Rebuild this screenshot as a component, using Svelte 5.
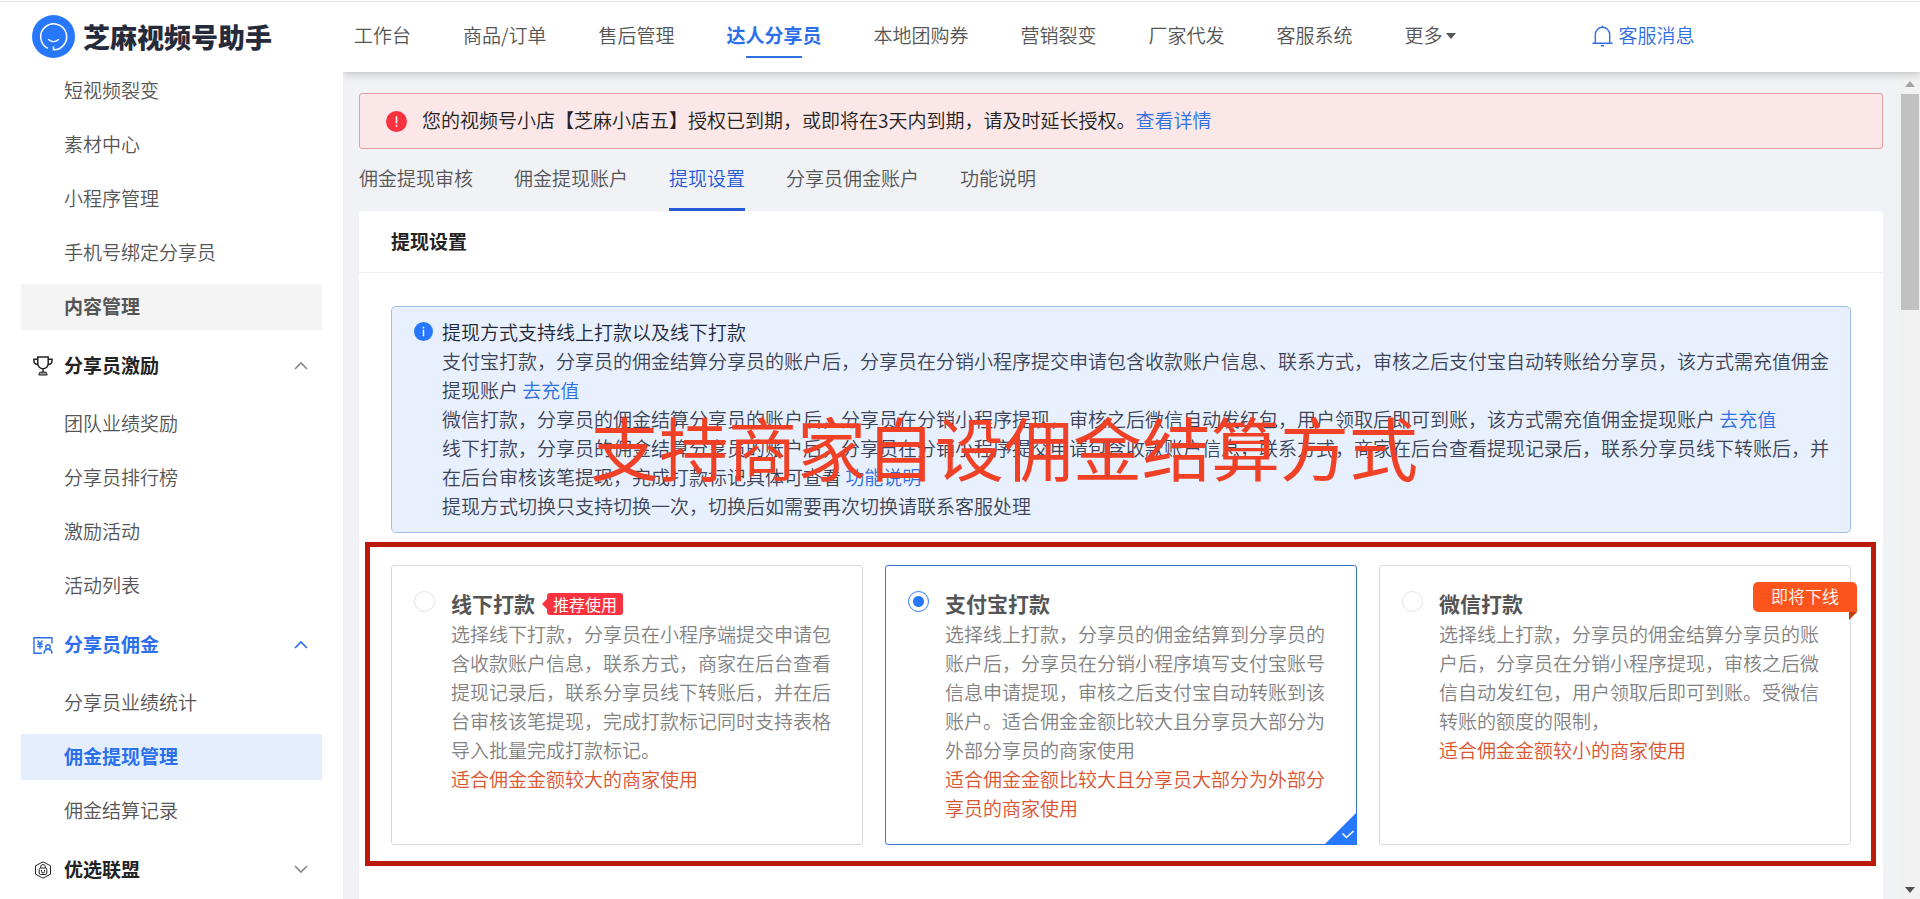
<script>
    const navItems = [
        '工作台', '商品/订单', '售后管理', '达人分享员', '本地团购券',
        '营销裂变', '厂家代发', '客服系统',
    ];
    let activeNav = '达人分享员';

    const menu = [
        {
            items: ['短视频裂变', '素材中心', '小程序管理', '手机号绑定分享员', '内容管理'],
        },
        {
            title: '分享员激励',
            icon: 'cup',
            items: ['团队业绩奖励', '分享员排行榜', '激励活动', '活动列表'],
        },
        {
            title: '分享员佣金',
            icon: 'money',
            items: ['分享员业绩统计', '佣金提现管理', '佣金结算记录'],
        },
        { title: '优选联盟', icon: 'union', items: [] },
    ];
    const hovered = '内容管理';
    let activeItem = '佣金提现管理';

    const tabs = ['佣金提现审核', '佣金提现账户', '提现设置', '分享员佣金账户', '功能说明'];
    let activeTab = '提现设置';

    const methods = [
        {
            id: 'offline',
            name: '线下打款',
            tag: '推荐使用',
            desc: '选择线下打款，分享员在小程序端提交申请包含收款账户信息，联系方式，商家在后台查看提现记录后，联系分享员线下转账后，并在后台审核该笔提现，完成打款标记同时支持表格导入批量完成打款标记。',
            tip: '适合佣金金额较大的商家使用',
        },
        {
            id: 'alipay',
            name: '支付宝打款',
            desc: '选择线上打款，分享员的佣金结算到分享员的账户后，分享员在分销小程序填写支付宝账号信息申请提现，审核之后支付宝自动转账到该账户。适合佣金金额比较大且分享员大部分为外部分享员的商家使用',
            tip: '适合佣金金额比较大且分享员大部分为外部分享员的商家使用',
        },
        {
            id: 'wechat',
            name: '微信打款',
            ribbon: '即将下线',
            desc: '选择线上打款，分享员的佣金结算分享员的账户后，分享员在分销小程序提现，审核之后微信自动发红包，用户领取后即可到账。受微信转账的额度的限制，',
            tip: '适合佣金金额较小的商家使用',
        },
    ];
    let method = 'alipay';
</script>

<svelte:head>
    <title>芝麻视频号助手 - 提现设置</title>
</svelte:head>

<div class="page">
    <aside class="sidebar">
        <a class="logo" href="#home">
            <svg width="43" height="43" viewBox="0 0 43 43" fill="none">
                <circle cx="21.5" cy="21.5" r="21.5" fill="#2878ff" />
                <path d="M15.8 33.4A13 13 0 1 1 21.5 34.8V31.4" stroke="#fff" stroke-width="1.5" />
                <path d="M16.5 24.6q5 4.200 10 0" stroke="#fff" stroke-width="1.3" stroke-linecap="round" />
            </svg>
            <span>芝麻视频号助手</span>
        </a>
        <nav class="menu">
            {#each menu as group}
                {#if group.title}
                    <button class="group" class:active={group.items.includes(activeItem)}>
                        {#if group.icon === 'cup'}
                            <svg width="20" height="20" viewBox="0 0 20 20" fill="none" stroke="currentColor" stroke-width="1.5">
                                <path d="M4.800 1h10.400v6.500a5.200 5.200 0 0 1-10.400 0zM4.800 3.200H1V5c0 2 1.600 3.400 4 3.500M15.200 3.200H19V5c0 2-1.600 3.400-4 3.500M10 12.700v3.300" />
                                <path d="M6.800 16.200h6.400l1 2.800H5.800z" fill="currentColor" fill-opacity=".45" stroke-width="1" />
                            </svg>
                        {:else if group.icon === 'money'}
                            <svg width="20" height="20" viewBox="0 0 20 20" fill="none" stroke="currentColor" stroke-width="1.4">
                                <path d="M9 18.300H1V2.700h18V8.500" />
                                <path d="M4.500 5.500 7 8.800l2.500-3.300M7 8.800v5.400M4.200 9h5.600M4.200 11.500h5.600" stroke-width="1.300" />
                                <circle cx="15" cy="12" r="2.200" />
                                <path d="M11 18.800c0-2.800 1.600-4.500 4-4.500s4 1.700 4 4.500" />
                            </svg>
                        {:else}
                            <svg width="20" height="20" viewBox="0 0 20 20" fill="none" stroke="currentColor" stroke-width="1">
                                <path d="M10 1.800 17.500 5.800v8.400L10 18.200 2.500 14.200V5.800z" />
                                <rect x="6.200" y="8" width="7.600" height="6.500" rx="1.500" />
                                <path d="M7.600 8V7a2.400 2.400 0 0 1 4.800 0v1M8.500 10v1.500a1.500 1.500 0 0 0 3 0V10" />
                            </svg>
                        {/if}
                        <span class="group-title">{group.title}</span>
                        <svg class="arrow" class:closed={!group.items.length} width="14" height="9" viewBox="0 0 14 9" fill="none" stroke="currentColor" stroke-width="1.600">
                            <path d="m1 8 6-6L13 8" />
                        </svg>
                    </button>
                {/if}
                {#each group.items as item}
                    <a
                        class="item"
                        class:hovered={item === hovered}
                        class:active={item === activeItem}
                        href="#menu"
                        on:click|preventDefault={() => activeItem = item}
                    >{item}</a>
                {/each}
            {/each}
        </nav>
    </aside>

    <div class="main">
        <header class="header">
            <nav class="nav">
                {#each navItems as item}
                    <a
                        class:active={item === activeNav}
                        href="#nav"
                        on:click|preventDefault={() => activeNav = item}
                    >{item}</a>
                {/each}
                <button class="more">更多<i class="caret"></i></button>
            </nav>
            <a class="message" href="#message">
                <svg width="21" height="22" viewBox="0 0 21 22" fill="none" stroke="currentColor" stroke-width="1.400">
                    <path d="M.5 18.300h20M3.300 18.300V9.500a7.200 7.200 0 0 1 14.400 0v8.800M10.500 2.300V.6M9 20.800h3" />
                </svg>
                客服消息
            </a>
        </header>

        <div class="body">
            <main class="content">
                <div class="alert">
                    <svg width="21" height="21" viewBox="0 0 21 21">
                        <circle cx="10.500" cy="10.500" r="10.500" fill="#f8323f" />
                        <path d="M9.700 5.200h1.600v7.200H9.700zM9.700 14h1.600v1.700H9.700z" fill="#fff" />
                    </svg>
                    <p>您的视频号小店【芝麻小店五】授权已到期，或即将在3天内到期，请及时延长授权。<a href="#detail">查看详情</a></p>
                </div>

                <nav class="tabs">
                    {#each tabs as tab}
                        <button class:active={tab === activeTab} on:click={() => activeTab = tab}>{tab}</button>
                    {/each}
                </nav>

                <section class="panel">
                    <h2>提现设置</h2>
                    <div class="panel-body">
                        <div class="info">
                            <svg width="19" height="19" viewBox="0 0 19 19">
                                <circle cx="9.500" cy="9.500" r="9.500" fill="#2878ff" />
                                <path d="M8.800 4.800h1.400v1.600H8.800zM8.800 7.800h1.400v6.400H8.800z" fill="#fff" />
                            </svg>
                            <div class="info-text">
                                <p class="lead">提现方式支持线上打款以及线下打款</p>
                                <p>支付宝打款，分享员的佣金结算分享员的账户后，分享员在分销小程序提交申请包含收款账户信息、联系方式，审核之后支付宝自动转账给分享员，该方式需充值佣金提现账户 <a href="#recharge">去充值</a></p>
                                <p>微信打款，分享员的佣金结算分享员的账户后，分享员在分销小程序提现，审核之后微信自动发红包，用户领取后即可到账，该方式需充值佣金提现账户 <a href="#recharge">去充值</a></p>
                                <p>线下打款，分享员的佣金结算分享员的账户后，分享员在分销小程序提交申请包含收款账户信息，联系方式，商家在后台查看提现记录后，联系分享员线下转账后，并在后台审核该笔提现，完成打款标记具体可查看 <a href="#help">功能说明</a></p>
                                <p>提现方式切换只支持切换一次，切换后如需要再次切换请联系客服处理</p>
                            </div>
                            <strong class="caption">支持商家自设佣金结算方式</strong>
                        </div>

                        <div class="methods">
                            {#each methods as m}
                                <label class="card" class:checked={m.id === method}>
                                    <input type="radio" name="method" value={m.id} bind:group={method} />
                                    <span class="card-text">
                                        <span class="card-title">
                                            {m.name}
                                            {#if m.tag}<em class="tag">{m.tag}</em>{/if}
                                        </span>
                                        <span class="desc">{m.desc}</span>
                                        <span class="tip">{m.tip}</span>
                                    </span>
                                    {#if m.ribbon}<em class="ribbon">{m.ribbon}</em>{/if}
                                    {#if m.id === method}
                                        <svg class="corner" width="33" height="33" viewBox="0 0 33 33" fill="none">
                                            <path d="M33 0v33H0z" fill="#2878ff" />
                                            <path d="m18.500 21.500 4 4 7-6.500" stroke="#fff" stroke-width="1.600" />
                                        </svg>
                                    {/if}
                                </label>
                            {/each}
                        </div>
                    </div>
                </section>
            </main>

            <div class="scrollbar" aria-hidden="true">
                <i class="up"></i>
                <span class="thumb"></span>
                <i class="down"></i>
            </div>
        </div>
    </div>
</div>

<style>
    :global(body) {
        background: #fff;
        overflow: hidden;
    }
    .page {
        box-sizing: border-box;
        display: flex;
        height: calc(100vh - 1px);
        margin-top: 1px;
        border-top: 1px solid #e4e4e4;
        overflow: hidden;
        font-family: "Noto Sans CJK SC", sans-serif;
        font-size: 19px;
        font-weight: 350;
        line-height: 29px;
        color: #555;
    }
    a {
        color: #2f6fe0;
        text-decoration: none;
    }
    button {
        padding: 0;
        border: none;
        background: none;
        font: inherit;
        color: inherit;
        cursor: pointer;
    }
    p, h2 {
        margin: 0;
    }
    em, i {
        font-style: normal;
    }

    /* sidebar */
    .sidebar {
        flex: none;
        width: 343px;
        background: #fff;
    }
    .logo {
        display: flex;
        align-items: center;
        gap: 8px;
        height: 43px;
        padding: 13px 32px 10px;
        font-size: 27px;
        font-weight: 900;
        color: #262b3b;
    }
    .menu {
        display: flex;
        flex-direction: column;
        gap: 8px;
        padding: 0 21px;
    }
    .item {
        padding: 0 0 2px 43px;
        line-height: 44px;
        color: #555;
    }
    .item.hovered {
        background: #f4f4f4;
        font-weight: 700;
    }
    .item.active {
        background: #e5eeff;
        font-weight: 700;
        color: #2b70ea;
    }
    .group {
        display: flex;
        align-items: center;
        gap: 11px;
        height: 55px;
        padding: 0 14px 0 12px;
        font-weight: 700;
        color: #222;
    }
    .group.active {
        color: #2b70ea;
    }
    .group-title {
        padding-bottom: 3px;
    }
    .arrow {
        margin-left: auto;
        color: #888;
    }
    .arrow.closed {
        transform: rotate(180deg);
    }
    .group.active .arrow {
        color: #2b70ea;
    }

    /* top bar */
    .main {
        flex: 1;
        display: flex;
        flex-direction: column;
        min-width: 0;
    }
    .header {
        position: relative;
        z-index: 1;
        flex: none;
        display: flex;
        align-items: center;
        gap: 136px;
        box-sizing: border-box;
        height: 70px;
        padding: 0 11px 6px;
        background: #fff;
        box-shadow: 0 2px 8px rgba(0, 0, 0, 0.2);
        clip-path: inset(0 0 -12px 0);
        white-space: nowrap;
    }
    .nav {
        display: flex;
        gap: 52px;
    }
    .nav a {
        position: relative;
        color: #555;
    }
    .nav a.active {
        font-weight: 700;
        color: #2b70ea;
    }
    .nav a.active::after {
        content: '';
        position: absolute;
        left: 20px;
        right: 20px;
        bottom: -9px;
        height: 2px;
        background: #2f6fe0;
    }
    .more {
        display: flex;
        align-items: center;
        gap: 3px;
    }
    .caret {
        margin-top: 3px;
        border: 5px solid transparent;
        border-top: 6px solid #555;
        border-bottom: none;
    }
    .message {
        display: flex;
        align-items: center;
        gap: 6px;
    }
    .message svg {
        margin-top: 3px;
    }

    /* content */
    .body {
        flex: 1;
        display: flex;
        min-height: 0;
        background: #f0f2f6;
    }
    .content {
        flex: 1;
        display: flex;
        flex-direction: column;
        min-width: 0;
        padding: 21px 16px 0;
    }
    .alert {
        flex: none;
        display: flex;
        align-items: center;
        gap: 15px;
        box-sizing: border-box;
        height: 56px;
        padding: 0 26px;
        border: 1px solid #e69ca3;
        border-radius: 3px;
        background: #fbe6e8;
        color: #222;
    }
    .alert p {
        padding-bottom: 3px;
    }
    .tabs {
        flex: none;
        display: flex;
        gap: 41px;
    }
    .tabs button {
        padding: 14px 0 16px;
        border-bottom: 3px solid transparent;
    }
    .tabs button.active {
        border-bottom-color: #2459d8;
        color: #2459d8;
    }
    .panel {
        flex: 1;
        border-radius: 4px 4px 0 0;
        background: #fff;
    }
    h2 {
        padding: 15px 32px 17px;
        border-bottom: 1px solid #eee;
        font-size: 19px;
        font-weight: 700;
        color: #222;
    }
    .panel-body {
        padding: 33px 32px;
    }
    .info {
        position: relative;
        display: flex;
        gap: 9px;
        padding: 10px 16px 12px 22px;
        border: 1px solid #9fbce8;
        border-radius: 5px;
        background: #e8f0fe;
        color: #3c4356;
    }
    .info svg {
        flex: none;
        margin-top: 5px;
    }
    .lead {
        color: #222736;
    }
    .caption {
        position: absolute;
        top: 105px;
        left: 198px;
        font-size: 69px;
        font-weight: 400;
        line-height: 69px;
        color: #f04127;
        white-space: nowrap;
    }

    /* payout methods */
    .methods {
        display: grid;
        grid-template-columns: repeat(3, 1fr);
        gap: 22px;
        margin: 9px -25px 0 -26px;
        padding: 18px 20px 16px 21px;
        border: 5px solid #bb1a0b;
    }
    .card {
        position: relative;
        display: flex;
        gap: 16px;
        padding: 22px;
        border: 1px solid #d9d9d9;
        border-radius: 3px;
        cursor: pointer;
    }
    .card.checked {
        border-color: #3a76c8;
    }
    .card input {
        appearance: none;
        flex: none;
        box-sizing: border-box;
        width: 21px;
        height: 21px;
        margin: 3px 0 0;
        border: 1px solid #e2e2e2;
        border-radius: 50%;
        background: #fff;
    }
    .card input:checked {
        border-color: #2878ff;
        background: radial-gradient(circle, #2878ff 5px, #fff 6px);
    }
    .card-title {
        display: flex;
        align-items: center;
        gap: 12px;
        padding-bottom: 1px;
        font-size: 21px;
        font-weight: 700;
        line-height: 30px;
        color: #555;
    }
    .tag {
        position: relative;
        margin-top: 2px;
        padding: 0 6px;
        border-radius: 3px;
        background: #f8323f;
        font-size: 16px;
        font-weight: 400;
        line-height: 22px;
        color: #fff;
    }
    .tag::before {
        content: '';
        position: absolute;
        top: 6px;
        left: -5px;
        border: 5px solid transparent;
        border-right-color: #f8323f;
        border-left: none;
    }
    .desc, .tip {
        display: block;
        color: #828282;
    }
    .tip {
        color: #da5430;
    }
    .ribbon {
        position: absolute;
        top: 16px;
        right: -7px;
        padding: 0 18px 2px;
        border-radius: 5px 5px 0 5px;
        background: #fb541c;
        font-size: 17px;
        line-height: 28px;
        color: #fff;
    }
    .ribbon::after {
        content: '';
        position: absolute;
        top: 30px;
        right: 0;
        border-top: 8px solid #c23c0e;
        border-right: 8px solid transparent;
    }
    .corner {
        position: absolute;
        right: -1px;
        bottom: -1px;
    }

    /* scrollbar */
    .scrollbar {
        flex: none;
        display: flex;
        flex-direction: column;
        align-items: center;
        box-sizing: border-box;
        width: 21px;
        padding: 9px 1px 6px 2px;
        background: #f1f1f1;
    }
    .up, .down {
        border: 5px solid transparent;
    }
    .up {
        border-top: none;
        border-bottom: 6px solid #a3a3a3;
    }
    .down {
        margin-top: auto;
        border-bottom: none;
        border-top: 6px solid #505050;
    }
    .thumb {
        width: 100%;
        height: 216px;
        margin-top: 7px;
        background: #c1c1c1;
    }
</style>
